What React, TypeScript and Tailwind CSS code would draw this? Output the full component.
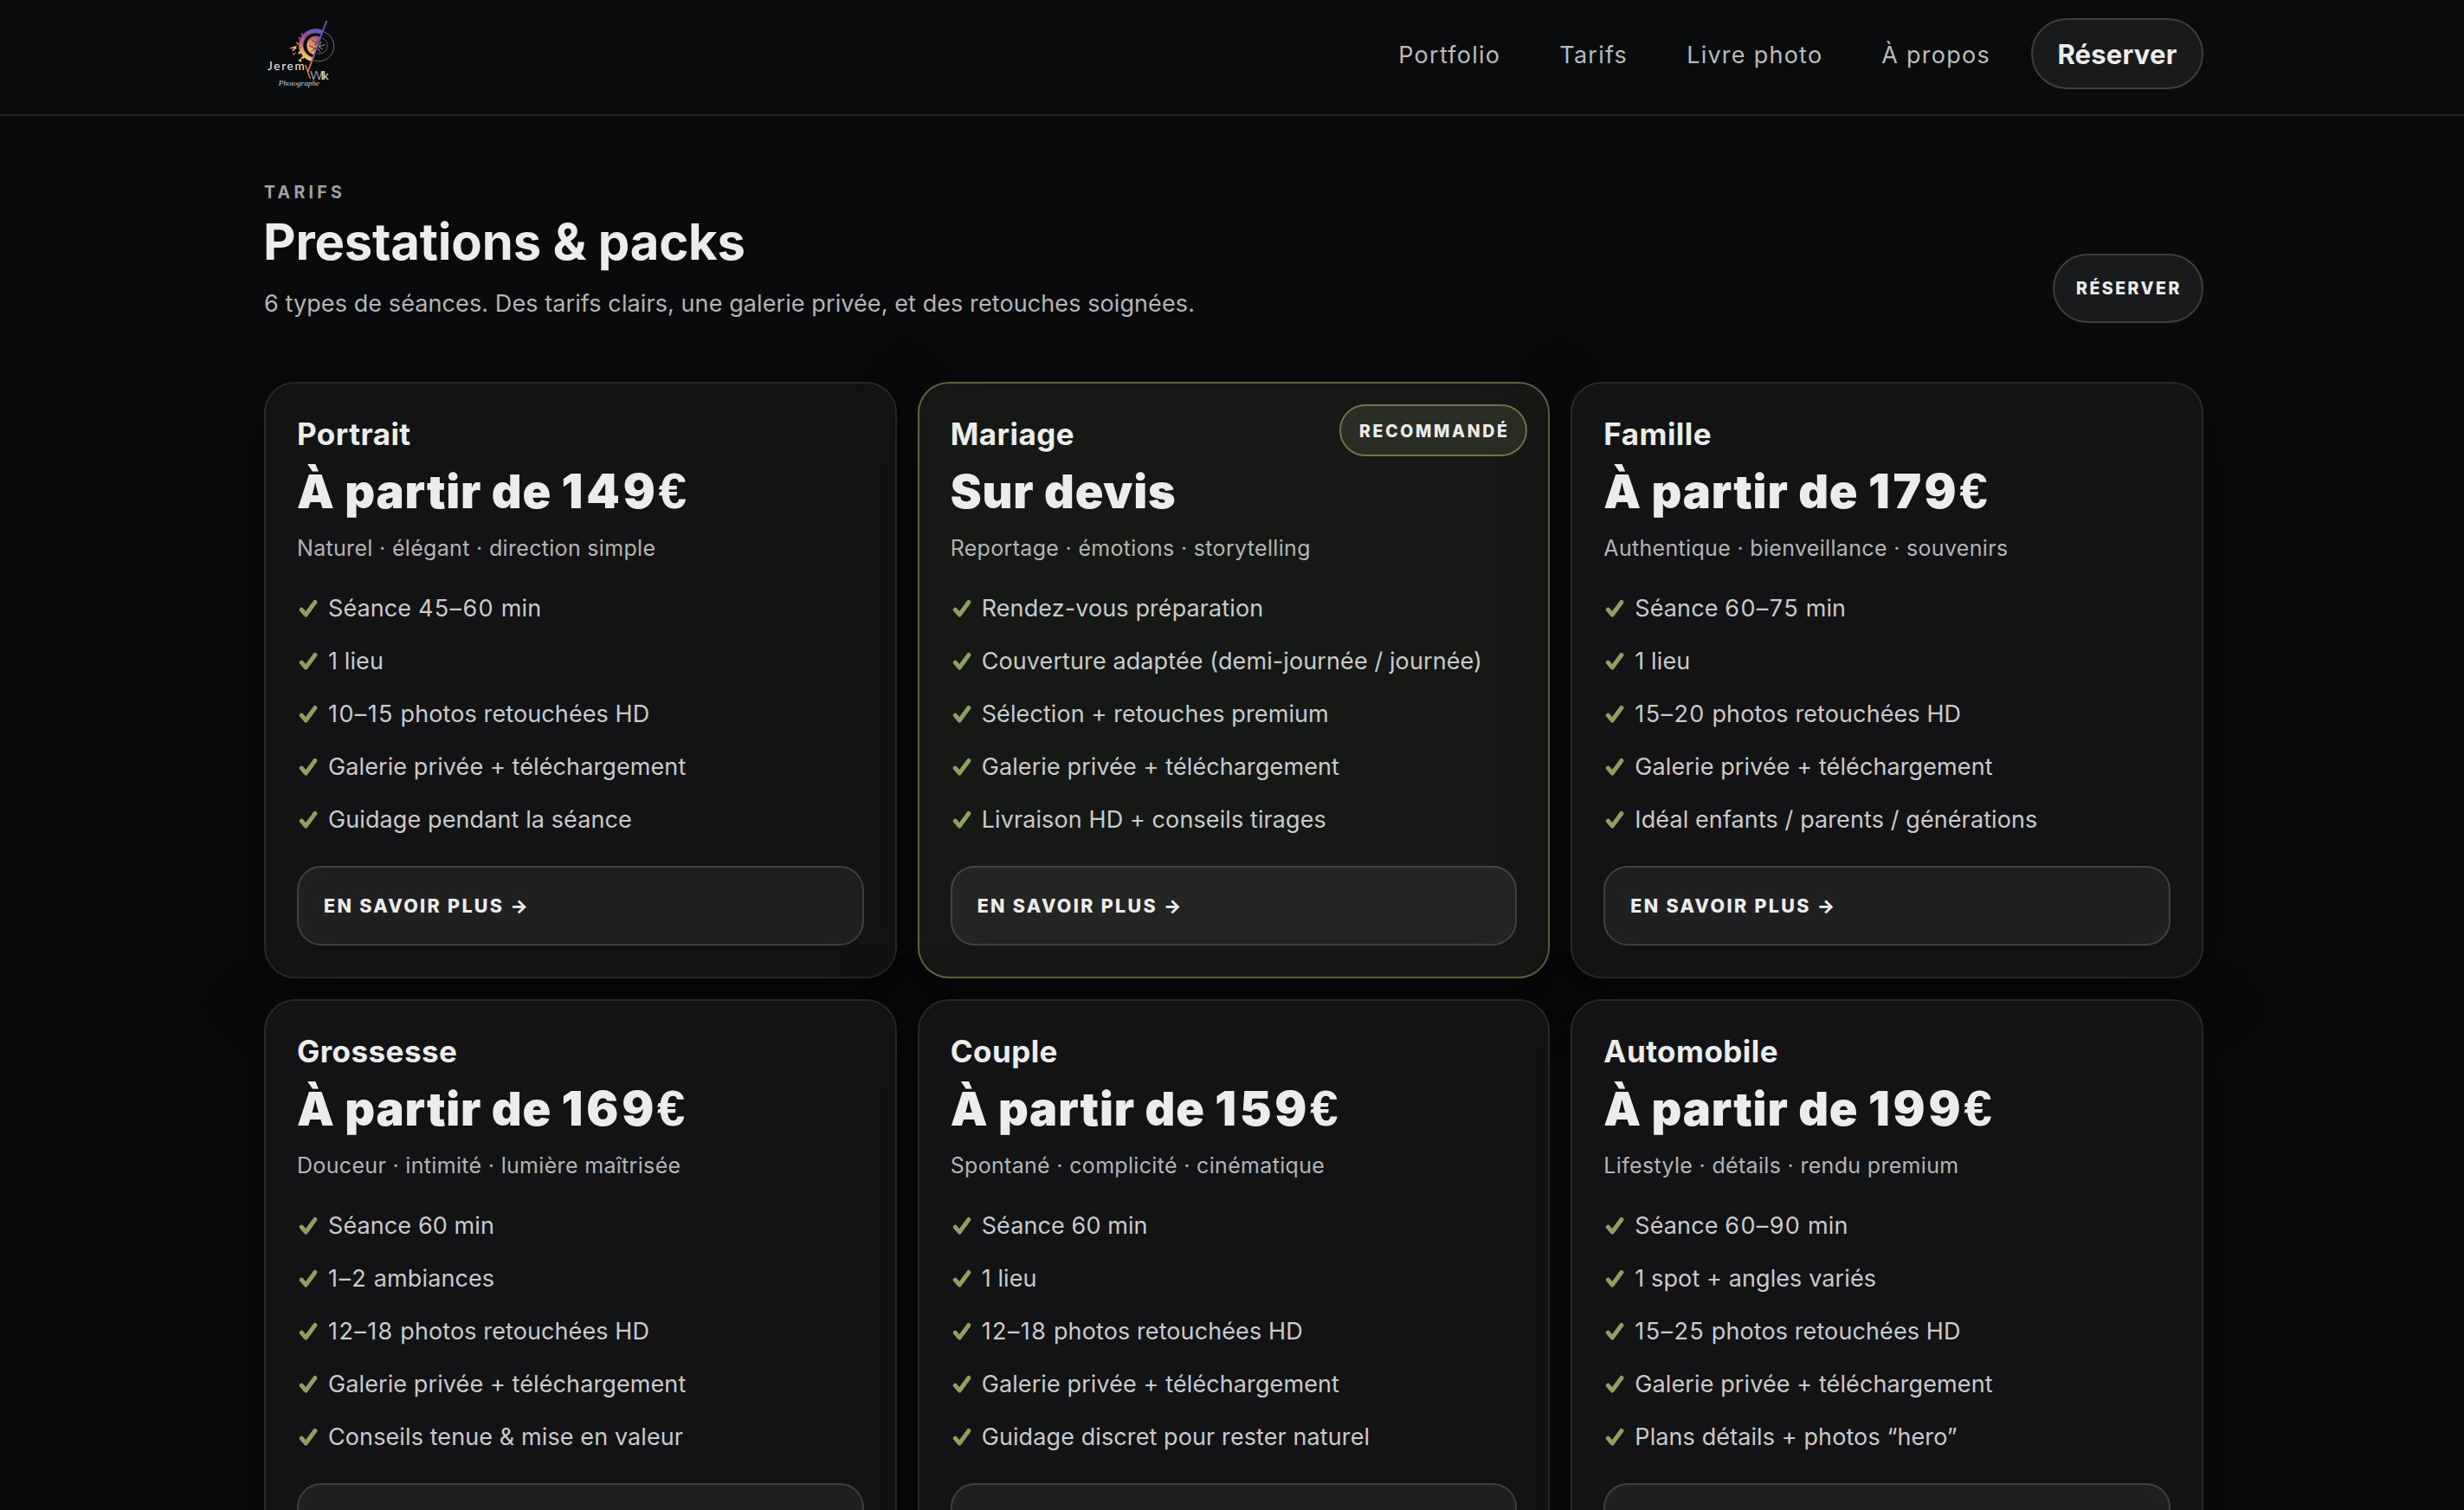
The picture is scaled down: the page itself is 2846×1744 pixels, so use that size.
import { clsx } from 'clsx';

interface Pack {
  title: string;
  price: string;
  amount?: string;
  tagline: string;
  features: string[];
  recommended?: boolean;
}

const NAV_LINKS = ['Portfolio', 'Tarifs', 'Livre photo', 'À propos'];

const PACKS: Pack[] = [
  {
    title: 'Portrait',
    price: 'À partir de',
    amount: '149',
    tagline: 'Naturel · élégant · direction simple',
    features: [
      'Séance 45–60 min',
      '1 lieu',
      '10–15 photos retouchées HD',
      'Galerie privée + téléchargement',
      'Guidage pendant la séance',
    ],
  },
  {
    title: 'Mariage',
    price: 'Sur devis',
    tagline: 'Reportage · émotions · storytelling',
    features: [
      'Rendez-vous préparation',
      'Couverture adaptée (demi-journée / journée)',
      'Sélection + retouches premium',
      'Galerie privée + téléchargement',
      'Livraison HD + conseils tirages',
    ],
    recommended: true,
  },
  {
    title: 'Famille',
    price: 'À partir de',
    amount: '179',
    tagline: 'Authentique · bienveillance · souvenirs',
    features: [
      'Séance 60–75 min',
      '1 lieu',
      '15–20 photos retouchées HD',
      'Galerie privée + téléchargement',
      'Idéal enfants / parents / générations',
    ],
  },
  {
    title: 'Grossesse',
    price: 'À partir de',
    amount: '169',
    tagline: 'Douceur · intimité · lumière maîtrisée',
    features: [
      'Séance 60 min',
      '1–2 ambiances',
      '12–18 photos retouchées HD',
      'Galerie privée + téléchargement',
      'Conseils tenue & mise en valeur',
    ],
  },
  {
    title: 'Couple',
    price: 'À partir de',
    amount: '159',
    tagline: 'Spontané · complicité · cinématique',
    features: [
      'Séance 60 min',
      '1 lieu',
      '12–18 photos retouchées HD',
      'Galerie privée + téléchargement',
      'Guidage discret pour rester naturel',
    ],
  },
  {
    title: 'Automobile',
    price: 'À partir de',
    amount: '199',
    tagline: 'Lifestyle · détails · rendu premium',
    features: [
      'Séance 60–90 min',
      '1 spot + angles variés',
      '15–25 photos retouchées HD',
      'Galerie privée + téléchargement',
      'Plans détails + photos “hero”',
    ],
  },
];

function Logo() {
  return (
    <svg viewBox="0 0 255 255" className="size-[85px]" fill="none">
      <defs>
        <linearGradient id="ring" x1="0.6" y1="0" x2="0.3" y2="1">
          <stop offset="0" stopColor="#6459b3" />
          <stop offset="0.3" stopColor="#9a5299" />
          <stop offset="0.55" stopColor="#d0647c" />
          <stop offset="0.8" stopColor="#eda35f" />
          <stop offset="1" stopColor="#f4cf6c" />
        </linearGradient>
        <linearGradient id="disc" x1="0.8" y1="0" x2="0.2" y2="1">
          <stop offset="0" stopColor="#8d4f93" />
          <stop offset="0.4" stopColor="#e08068" />
          <stop offset="1" stopColor="#f6cf72" />
        </linearGradient>
        <linearGradient id="slash" x1="217" y1="12" x2="155" y2="212" gradientUnits="userSpaceOnUse">
          <stop offset="0" stopColor="#5a5cae" />
          <stop offset="0.55" stopColor="#7a5aa8" />
          <stop offset="0.78" stopColor="#d8705f" />
          <stop offset="1" stopColor="#d98a4a" />
        </linearGradient>
      </defs>

      {/* Lens, lit half */}
      <path d="M200 52 A50 50 0 1 0 168 146" stroke="url(#ring)" strokeWidth="15" />
      <path d="M196 68 A33 33 0 1 0 176 130 Z" fill="url(#disc)" />
      <path d="M196 68 L176 98 M163 76 L184 92 M156 98 L180 110 M162 120 L182 104" stroke="#4a2a33" strokeWidth="3" />

      {/* Lens, outlined half */}
      <path d="M208 51 A52 52 0 0 1 172 149" stroke="#88888c" strokeWidth="2.5" />
      <path d="M202 72 A28 28 0 0 1 184 125" stroke="#6d6d72" strokeWidth="2.5" />
      <path d="M198 84 L190 102 L204 112 M190 102 L212 94 M186 108 L196 122" stroke="#a0a0a4" strokeWidth="3" />

      {/* Splinters */}
      <path d="M86 108 L113 98 L110 108 Z M96 113 L115 104 L100 118 Z M117 123 L131 111 L124 129 Z M126 142 L143 127 L138 143 Z M118 149 L130 142 L128 156 Z" fill="#f0c465" />
      <path d="M110 83 L123 91 L116 98 Z M98 125 L111 121 L104 133 Z M121 97 L131 108 L119 109 Z" fill="#c75a74" />
      <path d="M118 66 L127 71 L122 80 Z M131 51 L137 65 L128 62 Z M127 81 L136 88 L128 93 Z" fill="#a04c8c" />

      <path d="M217 12 L152 188" stroke="url(#slash)" strokeWidth="5.5" />
      <path d="M143 165 L160 212" stroke="#d9804c" strokeWidth="4.5" />

      <text x="12" y="184" fontSize="41" textLength="128" fill="#f0f0f0" className="font-['Lato']">
        Jerem
      </text>
      <text x="160" y="216" fontSize="42" fill="#f0f0f0" className="font-['Lato'] font-light">
        W
      </text>
      <text x="197" y="216" fontSize="42" fill="#f0f0f0" className="font-['Lato']">
        l
      </text>
      <text x="203" y="216" fontSize="40" fill="#f0f0f0" className="font-['Lato']">
        k
      </text>
      <text x="50" y="236" fontSize="27" textLength="142" fill="#cfcfcf" className="font-['Liberation_Serif'] italic">
        Photographe
      </text>
    </svg>
  );
}

function Check() {
  return (
    <svg viewBox="0 0 24 24" className="size-6 shrink-0" fill="none">
      <path
        d="M5.3 13.2 L10.2 19 L20.9 4.4"
        stroke="#8e9f5f"
        strokeWidth="5"
        strokeLinecap="round"
        strokeLinejoin="round"
      />
    </svg>
  );
}

// Number ranges ("10–15") are set slightly looser
function FeatureText({ text }: { text: string }) {
  return (
    <span className="pt-0.5 whitespace-pre">
      {text.split(/(\d+–\d+)/).map((part, i) =>
        i % 2 ? (
          <span key={i} className="tracking-[1.4px]">
            {part}
          </span>
        ) : (
          part
        )
      )}
    </span>
  );
}

function Header() {
  return (
    <header className="h-[134px] border-b-2 border-[#242527] bg-[#0a0b0d] pl-[305px]">
      <div className="flex h-[124px] w-[2240px] items-center justify-between">
        <Logo />
        <nav className="flex items-center gap-[68px]">
          {NAV_LINKS.map((link) => (
            <a key={link} className="pt-[3px] text-[27px] leading-10 tracking-[1.25px] text-[#bababa]">
              {link}
            </a>
          ))}
          <a className="-ml-[21px] flex h-[82px] w-[199px] items-center justify-center rounded-full border-2 border-[#3d3e3f] bg-[#191a1c] pt-0.5 text-[31px] font-bold tracking-[0.2px]">
            Réserver
          </a>
        </nav>
      </div>
    </header>
  );
}

function PackCard({ pack }: { pack: Pack }) {
  return (
    <article
      className={clsx(
        'relative rounded-[36px] border-2 p-9 shadow-[0_20px_80px_rgba(0,0,0,0.35)]',
        pack.recommended ? 'border-[#5b6541] bg-[#161815]' : 'border-[#28282a] bg-[#131315]'
      )}
    >
      {pack.recommended && (
        <span className="absolute top-6 right-6 flex h-[60px] w-[217px] items-center justify-center rounded-full border-2 border-[#69774a] bg-[#2a2d23] pt-[3px] pl-[2px] text-[19.5px] font-extrabold tracking-[2.65px]">
          RECOMMANDÉ
        </span>
      )}
      <h3 className="text-[35px] leading-[44px] font-bold tracking-[0.45px]">{pack.title}</h3>
      <p className="mt-[13px] text-[54px] leading-[64px] font-black tracking-[0.8px]">
        {pack.price}
        {pack.amount && (
          <>
            {' '}
            <span className="text-[55px] leading-none tracking-[3.8px]">{pack.amount}</span>
            <span className="font-['Liberation_Sans'] text-[58px] leading-none font-bold">€</span>
          </>
        )}
      </p>
      <p className="mt-[17px] text-[25px] leading-8 tracking-[0.32px] text-[#b4b4b5]">{pack.tagline}</p>
      <ul className="mt-8 flex flex-col gap-[18px]">
        {pack.features.map((feature) => (
          <li key={feature} className="flex h-[43px] items-center gap-3 text-[27px] tracking-[0.1px] text-[#cacacb]">
            <Check />
            <FeatureText text={feature} />
          </li>
        ))}
      </ul>
      <a
        className={clsx(
          'mt-8 flex h-[92px] items-center rounded-[28px] border-2 px-7 pt-px pl-[29px] text-[21.5px] font-extrabold tracking-[2.3px]',
          pack.recommended ? 'border-[#424441] bg-[#232522]' : 'border-[#404042] bg-[#202022]'
        )}
      >
        EN SAVOIR PLUS →
      </a>
    </article>
  );
}

export default function App() {
  return (
    <div className="h-[1744px] overflow-hidden bg-[#0a0a0c] font-['Inter',sans-serif] text-[#ececec]">
      <Header />
      <main className="w-[2545px] pt-[73px] pl-[305px]">
        <div className="flex items-end justify-between">
          <div className="pb-[3px]">
            <p className="text-[19.5px] leading-[30px] font-bold tracking-[4.3px] text-[#a1a1a2]">TARIFS</p>
            <h1 className="mt-[7px] -ml-px text-[58px] leading-[70px] font-bold tracking-[-0.2px]">Prestations & packs</h1>
            <p className="mt-[17px] -mb-px text-[27px] leading-10 tracking-[0.09px] text-[#b4b4b5]">
              6 types de séances. Des tarifs clairs, une galerie privée, et des retouches soignées.
            </p>
          </div>
          <a className="flex h-20 w-[174px] items-center justify-center rounded-full border-2 border-[#3d3e3f] bg-[#191a1c] pt-0.5 pl-[2px] text-[19.5px] font-extrabold tracking-[2.5px]">
            RÉSERVER
          </a>
        </div>
        <div className="mt-[68px] grid grid-cols-3 gap-6">
          {PACKS.map((pack) => (
            <PackCard key={pack.title} pack={pack} />
          ))}
        </div>
      </main>
    </div>
  );
}
